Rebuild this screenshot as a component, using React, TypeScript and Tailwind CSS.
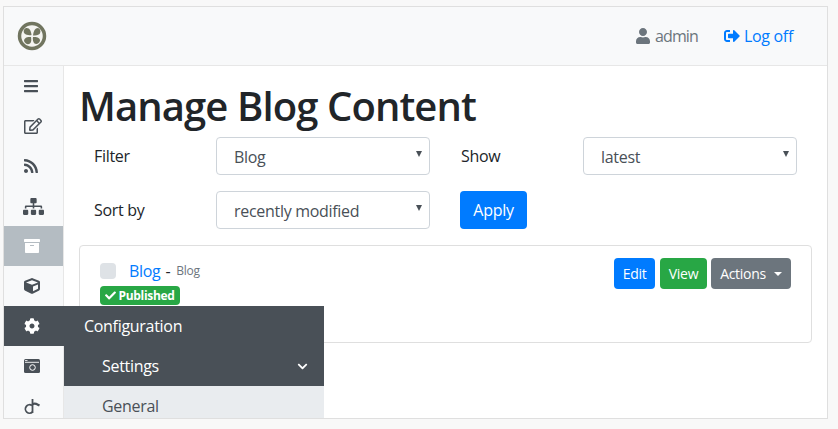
import { useState } from "react";
import {
  FaArchive,
  FaBars,
  FaCheck,
  FaChevronDown,
  FaCog,
  FaCube,
  FaRegEdit,
  FaRss,
  FaSignOutAlt,
  FaSitemap,
  FaUser,
} from "react-icons/fa";

function Logo() {
  return (
    <svg width="30" height="30" viewBox="0 0 30 30">
      <circle cx="15" cy="15" r="12.500" fill="#f4f4f0" stroke="#71755f" strokeWidth="3.500" />
      <path d="M14.500 14C14 9.500 12.500 6.500 9 7C6.500 8 6 11 7.500 12.500C9 14 12 14.500 14.500 14Z" fill="#71755f" />
      <path d="M16 14.500C16.500 10 18 7 21 7C23.500 8 24 11 22.500 13C21 14.500 18.500 14.500 16 14.500Z" fill="#71755f" />
      <path d="M14 16C10 15.500 7 17 7 20C8 23 11 24 13 22.500C14.500 21 14.500 18.500 14 16Z" fill="#71755f" />
      <path d="M16 16C20 15.500 23 17 23 19.500C22.500 22.500 19.500 23.500 17.500 22.500C16 21 15.500 18.500 16 16Z" fill="#71755f" />
    </svg>
  );
}

function RowIcon({ children, className = "text-[#495057]" }: { children: React.ReactNode; className?: string }) {
  return <div className={`flex h-10 items-center pl-[20px] ${className}`}>{children}</div>;
}

function FilterSelect({ value, options }: { value: string; options: string[] }) {
  const [selected, setSelected] = useState(value);
  return (
    <div className="relative h-[38px] w-[214px]">
      <select
        value={selected}
        onChange={(e) => setSelected(e.target.value)}
        className="h-full w-full appearance-none rounded border border-[#ced4da] bg-white pl-[17px] pt-[2px] text-[#495057]"
      >
        {options.map((o) => (
          <option key={o}>{o}</option>
        ))}
      </select>
      <span className="absolute right-[8px] top-[14px] h-0 w-0 border-x-[3.5px] border-t-[6px] border-x-transparent border-t-[#495057]" />
    </div>
  );
}

export default function App() {
  return (
    <div className="h-[429px] w-[838px] bg-[#f8f8f8] pl-[3px] pt-[6px] font-['Open_Sans',sans-serif] text-base tracking-[-0.3px] text-[#212529]">
      <div className="flex h-[413px] w-[825px] flex-col overflow-hidden border border-[#dfdfdf] bg-white">
        <header className="flex h-[59px] shrink-0 items-center justify-between border-b border-[#e7e7e7] bg-[#f8f9fa] pl-[13px] pr-[34px]">
          <Logo />
          <div className="flex items-center">
            <FaUser className="mr-[4px] text-[16px] text-[#6c757d]" />
            <span className="tracking-[-0.9px] text-[#6c757d]">admin</span>
            <a className="ml-[26px] flex items-center text-[#007bff]">
              <FaSignOutAlt className="mr-[4px] text-[16px]" />
              Log off
            </a>
          </div>
        </header>
        <div className="relative flex min-h-0 flex-1">
          <aside className="w-[60px] shrink-0 border-r border-[#e7e7e7] bg-[#f8f9fa]">
            <RowIcon><FaBars className="-ml-px text-[16px]" /></RowIcon>
            <RowIcon><FaRegEdit className="text-[18px]" /></RowIcon>
            <RowIcon><FaRss className="-ml-px text-[16px]" /></RowIcon>
            <RowIcon><FaSitemap className="-ml-px text-[21px]" /></RowIcon>
            <RowIcon className="bg-[#b4bcc2] text-white"><FaArchive className="text-[16px]" /></RowIcon>
            <RowIcon><FaCube className="text-[16px]" /></RowIcon>
            <RowIcon className="mr-[-1px] bg-[#495057] text-white"><FaCog className="text-[16px]" /></RowIcon>
            <RowIcon>
              <svg width="16" height="14" viewBox="0 0 16 14">
                <rect width="16" height="14" rx="1.500" fill="#495057" />
                <path d="M1 3.300h14" stroke="#fff" strokeWidth="0.900" />
                <path d="M1 1.500h2.500" stroke="#fff" strokeWidth="0.800" />
                <circle cx="8.500" cy="8.500" r="2.800" fill="none" stroke="#fff" strokeWidth="1" />
              </svg>
            </RowIcon>
            <RowIcon>
              <svg width="16" height="17" viewBox="0 0 16 17" fill="none" stroke="#495057" strokeWidth="1.800">
                <path d="M8 7.500A4.200 4.200 0 1 0 8.500 14" />
                <path d="M8.500 1v14" />
                <path d="M8.500 6.500C10.500 4.500 12.500 6 15.500 7.500" strokeWidth="2.200" />
              </svg>
            </RowIcon>
          </aside>

          <main className="min-w-0 flex-1 pl-[15px] pr-[14px]">
            <h1 className="mt-[17px] text-[40px] font-semibold leading-[46px] tracking-[-0.9px]">Manage Blog Content</h1>
            <div className="mt-[8px] flex flex-col gap-4 pl-[15px]">
              <div className="flex items-center">
                <span className="w-[122px]">Filter</span>
                <FilterSelect value="Blog" options={["Blog"]} />
                <span className="ml-[31px] w-[122px]">Show</span>
                <FilterSelect value="latest" options={["latest"]} />
              </div>
              <div className="flex items-center">
                <span className="w-[122px]">Sort by</span>
                <FilterSelect value="recently modified" options={["recently modified"]} />
                <button className="ml-[30px] h-[38px] w-[67px] rounded bg-[#007bff] text-white">Apply</button>
              </div>
            </div>
            <div className="mt-4 flex h-[98px] w-[733px] items-start justify-between rounded border border-[#dfdfdf] pl-5 pr-5 pt-3">
              <div>
                <div className="flex h-[24px] items-center pt-[2px]">
                  <span className="h-4 w-4 rounded bg-[#dee2e6]" />
                  <a className="ml-[13px] text-[#007bff]">Blog</a>
                  <span className="ml-[5px]">-</span>
                  <span className="ml-[6px] text-[12px] text-[#6c757d]">Blog</span>
                </div>
                <span className="mt-[4px] flex h-[19px] w-[80px] items-center justify-center gap-[2px] rounded bg-[#28a745] text-[12px] font-bold text-white">
                  <FaCheck className="text-[11px]" />
                  Published
                </span>
              </div>
              <div className="flex gap-[5px] text-[14px] text-white">
                <button className="h-[31px] w-[41px] rounded bg-[#007bff]">Edit</button>
                <button className="h-[31px] w-[47px] rounded bg-[#28a745]">View</button>
                <button className="-ml-px flex h-[31px] w-[80px] items-center justify-center rounded bg-[#6c757d]">
                  Actions
                  <span className="ml-2 h-0 w-0 border-x-[4px] border-t-[4px] border-x-transparent border-t-white" />
                </button>
              </div>
            </div>
          </main>

          {/* flyout menu over the content */}
          <div className="absolute left-[60px] top-[240px] w-[260px] overflow-hidden">
            <div className="flex h-10 items-center bg-[#495057] pl-5 text-white">Configuration</div>
            <div className="flex h-10 items-center justify-between bg-[#495057] pl-[38px] pr-[16px] text-white">
              Settings
              <FaChevronDown className="text-[11px]" />
            </div>
            <div className="flex h-10 items-center bg-[#e9ecef] pl-[38px] text-[#495057]">General</div>
          </div>
        </div>
      </div>
    </div>
  );
}
